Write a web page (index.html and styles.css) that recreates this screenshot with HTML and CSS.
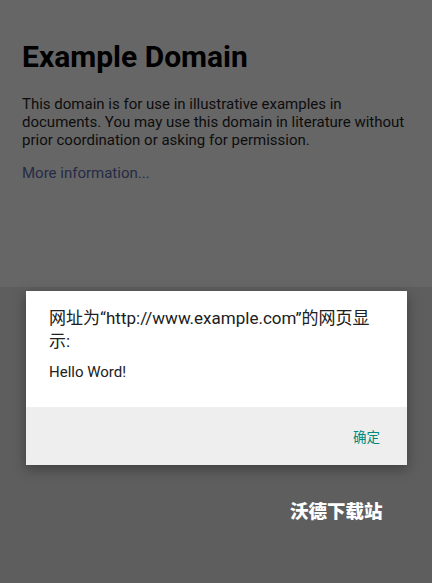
FILE: index.html
```html
<!DOCTYPE html>
<html>
<head>
<meta charset="utf-8">
<link rel="stylesheet" href="styles.css">
</head>
<body>
<div class="page">
  <div class="content">
    <h1 class="title">Example Domain</h1>
    <p class="text">This domain is for use in illustrative examples in documents. You may use this domain in literature without prior coordination or asking for permission.</p>
    <p class="text"><a class="link">More information...</a></p>
  </div>
  <div class="lower"></div>
</div>
<div class="dialog">
  <div class="dialog-body">
    <div class="dialog-title">网址为“http://www.example.com”的网页显示:</div>
    <div class="dialog-msg">Hello Word!</div>
  </div>
  <div class="dialog-actions">
    <span class="btn">确定</span>
  </div>
</div>
<div class="watermark">沃德下载站</div>
</body>
</html>
```
FILE: styles.css
```css
html, body {
  margin: 0;
  padding: 0;
  width: 432px;
  height: 583px;
  overflow: hidden;
  background: #5e5e5e;
  font-family: Roboto, "Noto Sans CJK SC", sans-serif;
}
.page {
  display: flex;
  flex-direction: column;
  height: 583px;
}
.content {
  height: 287px;
  background: #666666;
  padding: 0 22px;
  box-sizing: border-box;
  overflow: hidden;
}
.title {
  margin: 40px 0 0;
  font-size: 30px;
  font-weight: 700;
  line-height: 34px;
  color: #000;
}
.text {
  margin: 21px 0 0;
  font-size: 15px;
  line-height: 18px;
  color: #0d0d0d;
}
.text + .text { margin-top: 15px; }
.link {
  color: #252b45;
}
.lower {
  flex: 1;
  background: #5e5e5e;
}
.dialog {
  position: absolute;
  left: 26px;
  top: 291px;
  width: 381px;
  background: #fff;
  box-shadow: 0 4px 12px rgba(0,0,0,0.35);
}
.dialog-body {
  height: 116px;
  padding: 16px 24px 0 23px;
  box-sizing: border-box;
}
.dialog-title {
  max-width: 327px;
  font-size: 17px;
  line-height: 23px;
  color: #202020;
}
.dialog-msg {
  margin-top: 10px;
  font-size: 15px;
  line-height: 18px;
  color: #212121;
}
.dialog-actions {
  height: 58px;
  background: #eeeeee;
  display: flex;
  justify-content: flex-end;
  align-items: center;
  padding-right: 27px;
}
.btn {
  font-size: 13.5px;
  color: #00897b;
  font-family: "Noto Sans CJK SC", sans-serif;
}
.watermark {
  position: absolute;
  left: 290px;
  top: 497px;
  font-size: 18.5px;
  font-weight: 900;
  color: #fff;
  font-family: "Noto Sans CJK SC", sans-serif;
}
```
